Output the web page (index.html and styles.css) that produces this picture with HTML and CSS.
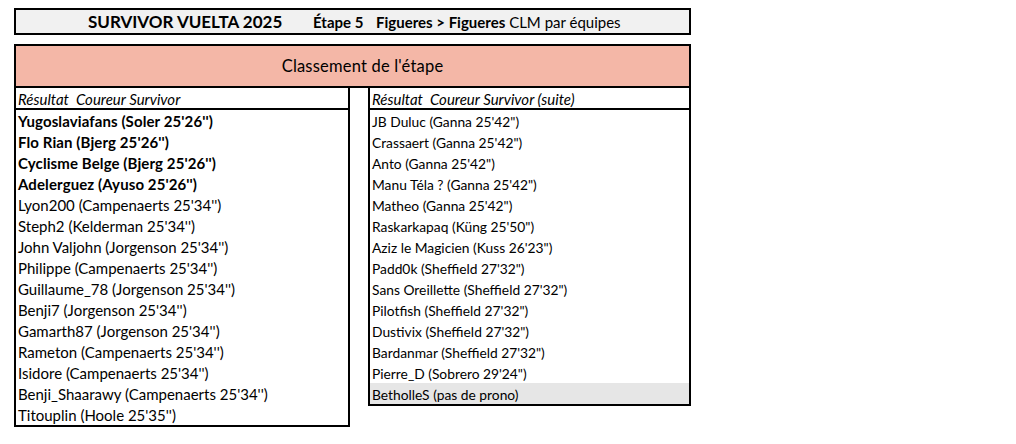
FILE: index.html
```html
<!DOCTYPE html>
<html lang="fr">
<head>
<meta charset="utf-8">
<title>Survivor Vuelta 2025</title>
<link rel="stylesheet" href="styles.css">
</head>
<body>
<div class="sheet">
  <div class="title-box">
    <span class="main-title">SURVIVOR VUELTA 2025</span>
    <span class="stage"><b>Étape 5</b></span>
    <span class="route"><b>Figueres &gt; Figueres</b> CLM par équipes</span>
  </div>
  <div class="board">
    <div class="band"><span class="band-text">Classement de l'étape</span></div>
    <div class="columns">
      <div class="col col-left">
        <div class="col-head">Résultat&nbsp; Coureur Survivor</div>
        <div class="rows">
          <div class="row strong">Yugoslaviafans (Soler 25'26'')</div>
          <div class="row strong">Flo Rian (Bjerg 25'26'')</div>
          <div class="row strong">Cyclisme Belge (Bjerg 25'26'')</div>
          <div class="row strong">Adelerguez (Ayuso 25'26'')</div>
          <div class="row">Lyon200 (Campenaerts 25'34'')</div>
          <div class="row">Steph2 (Kelderman 25'34'')</div>
          <div class="row">John Valjohn (Jorgenson 25'34'')</div>
          <div class="row">Philippe (Campenaerts 25'34'')</div>
          <div class="row">Guillaume_78 (Jorgenson 25'34'')</div>
          <div class="row">Benji7 (Jorgenson 25'34'')</div>
          <div class="row">Gamarth87 (Jorgenson 25'34'')</div>
          <div class="row">Rameton (Campenaerts 25'34'')</div>
          <div class="row">Isidore (Campenaerts 25'34'')</div>
          <div class="row">Benji_Shaarawy (Campenaerts 25'34'')</div>
          <div class="row">Titouplin (Hoole 25'35'')</div>
        </div>
      </div>
      <div class="col col-right">
        <div class="col-head">Résultat&nbsp; Coureur Survivor (suite)</div>
        <div class="rows rows-small">
          <div class="row">JB Duluc (Ganna 25'42")</div>
          <div class="row">Crassaert (Ganna 25'42")</div>
          <div class="row">Anto (Ganna 25'42")</div>
          <div class="row">Manu Téla ? (Ganna 25'42")</div>
          <div class="row">Matheo (Ganna 25'42")</div>
          <div class="row">Raskarkapaq (Küng 25'50")</div>
          <div class="row">Aziz le Magicien (Kuss 26'23")</div>
          <div class="row">Padd0k (Sheffield 27'32")</div>
          <div class="row">Sans Oreillette (Sheffield 27'32")</div>
          <div class="row">Pilotfish (Sheffield 27'32")</div>
          <div class="row">Dustivix (Sheffield 27'32")</div>
          <div class="row">Bardanmar (Sheffield 27'32")</div>
          <div class="row">Pierre_D (Sobrero 29'24")</div>
          <div class="row muted">BetholleS (pas de prono)</div>
        </div>
      </div>
    </div>
  </div>
</div>
</body>
</html>
```
FILE: styles.css
```css
html, body {
  margin: 0;
  padding: 0;
  background: #ffffff;
}
body {
  font-family: Lato, "Open Sans", "Liberation Sans", sans-serif;
  font-size: 15px;
  color: #000;
}
.sheet {
  padding: 8px 0 0 14px;
  width: 677px;
}
.title-box {
  box-sizing: border-box;
  height: 27px;
  border: 2px solid #000;
  background: #f1f1f1;
  display: flex;
  align-items: center;
  padding-left: 72px;
  white-space: nowrap;
}
.main-title {
  font-weight: bold;
  font-size: 17px;
  width: 225px;
}
.stage {
  width: 63px;
}
.route b { font-weight: bold; }
.board {
  margin-top: 9px;
}
.band {
  box-sizing: border-box;
  height: 44px;
  border: 2px solid #000;
  background: #f4b7a7;
  display: flex;
  align-items: center;
  justify-content: center;
  padding-left: 20px;
}
.band-text {
  font-size: 16.5px;
  letter-spacing: 0.2px;
}
.columns {
  display: flex;
  align-items: flex-start;
}
.col {
  box-sizing: border-box;
  border: 2px solid #000;
  border-top: none;
}
.col-left { width: 336px; }
.col-right { width: 323px; margin-left: 18px; }
.col-head {
  box-sizing: border-box;
  height: 22px;
  padding-top: 2px;
  line-height: 18px;
  font-style: italic;
  padding-left: 2px;
  border-bottom: 2px solid #000;
  white-space: nowrap;
}
.row {
  box-sizing: border-box;
  height: 21px;
  padding-top: 2px;
  line-height: 19px;
  padding-left: 2px;
  white-space: nowrap;
}
.rows-small .row {
  font-size: 13.8px;
}
.row.strong {
  font-weight: bold;
  letter-spacing: 0.1px;
}
.row.muted { background: #e6e6e6; }
```
